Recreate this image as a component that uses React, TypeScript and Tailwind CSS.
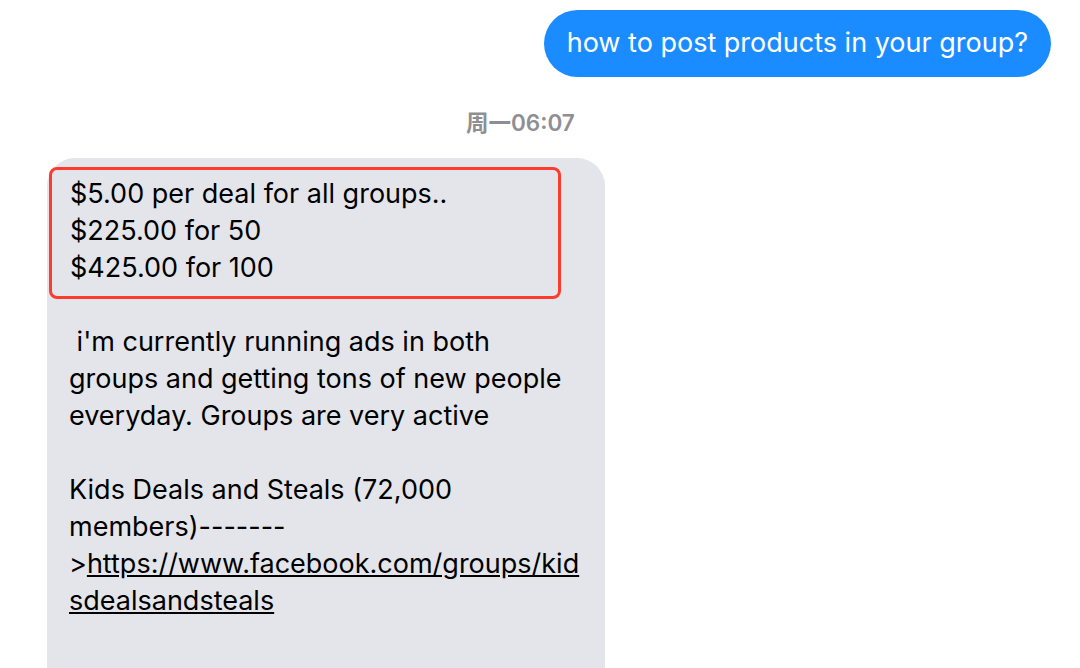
export default function App() {
  return (
    <div className="w-[1080px] h-[668px] overflow-hidden bg-white font-['Inter','Noto_Sans_CJK_SC',sans-serif]">
      {/* outgoing */}
      <div className="flex justify-end pt-[10px] pr-[29px]">
        <div className="h-[67px] rounded-full bg-[#1a8cff] px-[23px] flex items-center text-white text-[27px]">
          how to post products in your group?
        </div>
      </div>

      {/* time */}
      <div className="flex pl-[466px] mt-[33px] h-[26px] items-center text-[22.5px] font-semibold text-[#8e8e93]">
        周一06:07
      </div>

      {/* incoming */}
      <div className="ml-[47px] mt-[22px] w-[558px] h-[600px] rounded-t-[28px] bg-[#e4e5ea] pt-[9px] pr-[30px] text-[27px] leading-[37px] text-black">
        <div className="ml-[2px] w-[512px] rounded-[8px] border-[3px] border-[#ff3b30] pt-[5px] pb-[10px] pl-[18px]">
          <div>$5.00 per deal for all groups..</div>
          <div>$225.00 for 50</div>
          <div>$425.00 for 100</div>
        </div>
        <div className="pl-[22px] mt-[24px] whitespace-pre">
          <div>{" i'm currently running ads in both"}</div>
          <div>groups and getting tons of new people</div>
          <div>everyday. Groups are very active</div>
          <div className="h-[37px]" />
          <div>Kids Deals and Steals (72,000</div>
          <div>members)-------</div>
          <div>
            &gt;<span className="underline">https://www.facebook.com/groups/kid</span>
          </div>
          <div className="underline">sdealsandsteals</div>
        </div>
      </div>
    </div>
  );
}
